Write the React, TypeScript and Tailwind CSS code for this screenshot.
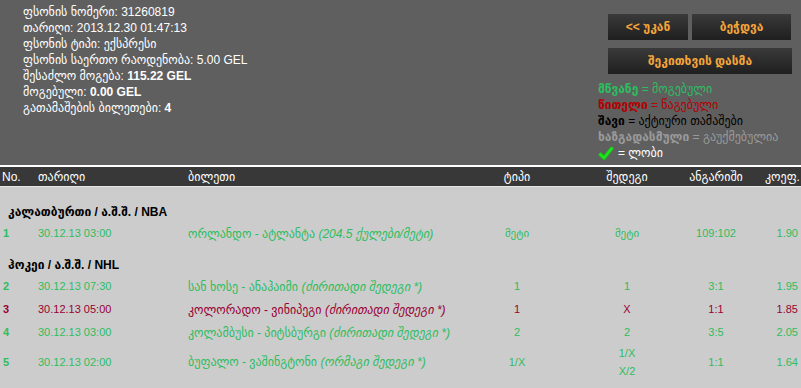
import React from "react";

type Row = {
  no: string;
  date: string;
  match: string;
  note: string;
  type: string;
  result: string[];
  score: string;
  coef: string;
  lost?: boolean;
};

const groups: { title: string; rows: Row[] }[] = [
  {
    title: "კალათბურთი / ა.შ.შ. / NBA",
    rows: [
      { no: "1", date: "30.12.13 03:00", match: "ორლანდო - ატლანტა", note: "(204.5 ქულები/მეტი)", type: "მეტი", result: ["მეტი"], score: "109:102", coef: "1.90" },
    ],
  },
  {
    title: "ჰოკეი / ა.შ.შ. / NHL",
    rows: [
      { no: "2", date: "30.12.13 07:30", match: "სან ხოსე - ანაჰაიმი", note: "(ძირითადი შედეგი *)", type: "1", result: ["1"], score: "3:1", coef: "1.95" },
      { no: "3", date: "30.12.13 05:00", match: "კოლორადო - ვინიპეგი", note: "(ძირითადი შედეგი *)", type: "1", result: ["X"], score: "1:1", coef: "1.85", lost: true },
      { no: "4", date: "30.12.13 03:00", match: "კოლამბუსი - პიტსბურგი", note: "(ძირითადი შედეგი *)", type: "2", result: ["2"], score: "3:5", coef: "2.05" },
      { no: "5", date: "30.12.13 02:00", match: "ბუფალო - ვაშინგტონი", note: "(ორმაგი შედეგი *)", type: "1/X", result: ["1/X", "X/2"], score: "1:1", coef: "1.64" },
    ],
  },
];

const cols = "grid grid-cols-[38px_150px_284px_90px_130px_48px_1fr]";

function Check() {
  return (
    <svg width="16" height="16" viewBox="0 0 16 16" className="shrink-0">
      <path d="M1.5 8.5 L6 13 L14.5 2.5" fill="none" stroke="#18b818" strokeWidth="4" strokeLinejoin="round" />
      <path d="M1.5 8.5 L6 13 L14.5 2.5" fill="none" stroke="#22e022" strokeWidth="2.4" strokeLinejoin="round" />
    </svg>
  );
}

function Btn({ label, className }: { label: string; className: string }) {
  return (
    <button className={`h-[26px] bg-gradient-to-b from-[#3a3a3a] to-[#1f1f1f] text-[#f5a53a] font-bold text-[12px] ${className}`}>
      {label}
    </button>
  );
}

export default function App() {
  return (
    <div className="min-h-screen bg-[#cccccc] font-['Liberation_Sans','DejaVu_Sans',sans-serif] text-[12px]">
      {/* ticket summary */}
      <div className="h-[165px] bg-[#5f5f5f] flex justify-between">
        <div className="pl-[23px] pt-[4px] leading-[16px] text-white">
          <div>ფსონის ნომერი: 31260819</div>
          <div>თარიღი: 2013.12.30 01:47:13</div>
          <div>ფსონის ტიპი: ექსპრესი</div>
          <div>ფსონის საერთო რაოდენობა: 5.00 GEL</div>
          <div>შესაძლო მოგება: <b>115.22 GEL</b></div>
          <div>მოგებული: <b>0.00 GEL</b></div>
          <div>გათამაშების ბილეთები: <b>4</b></div>
        </div>
        <div className="w-[203px] pt-[14px]">
          <div className="pl-[10px] flex flex-col gap-[8px]">
            <div className="flex gap-[4px]">
              <Btn label="<< უკან" className="w-[80px]" />
              <Btn label="ბეჭდვა" className="w-[99px]" />
            </div>
            <Btn label="შეკითხვის დასმა" className="w-[184px]" />
          </div>
          <div className="mt-[7px] leading-[16px] whitespace-nowrap">
            <div className="text-[#2ebd5f]"><b>მწვანე</b> = მოგებული</div>
            <div className="text-[#b30000]"><b>წითელი</b> = წაგებული</div>
            <div className="text-black"><b>შავი</b> = აქტიური თამაშები</div>
            <div className="text-[#9a9a9a]"><b>ხაზგადასმული</b> = გაუქმებულია</div>
            <div className="flex items-center gap-[4px] text-white">
              <Check />
              <span>= ლობი</span>
            </div>
          </div>
        </div>
      </div>

      <div className="h-[2px] bg-white" />

      {/* table header */}
      <div className={`${cols} h-[20px] items-center bg-[#383838] text-white border-b border-[#e6e6e6] overflow-hidden whitespace-nowrap`}>
        <div className="pl-[2px]">No.</div>
        <div>თარიღი</div>
        <div>ბილეთი</div>
        <div className="flex justify-center">ტიპი</div>
        <div className="flex justify-center">შედეგი</div>
        <div className="flex justify-center">ანგარიში</div>
        <div className="pl-[25px]">კოეფ.</div>
      </div>

      {/* table body */}
      <div className="pt-[15px] text-[11px]">
        {groups.map((g, gi) => (
          <div key={g.title} className={gi > 0 ? "mt-[10px]" : ""}>
            <div className="h-[20px] flex items-center pl-[8px] font-bold text-[12px] text-black">{g.title}</div>
            {g.rows.map((r) => (
              <div
                key={r.no}
                className={`${cols} items-center ${r.result.length > 1 ? "h-[32px]" : "h-[23px]"} ${r.lost ? "text-[#990033]" : "text-[#2ebd5f]"}`}
              >
                <div className="pl-[3px] font-bold">{r.no}</div>
                <div>{r.date}</div>
                <div className="whitespace-nowrap text-[12px]">
                  {r.match} <i>{r.note}</i>
                </div>
                <div className="flex justify-center">{r.type}</div>
                <div className={`flex flex-col items-center ${r.result.length > 1 ? "leading-[18px]" : ""}`}>
                  {r.result.map((x) => (
                    <span key={x}>{x}</span>
                  ))}
                </div>
                <div className="flex justify-center">{r.score}</div>
                <div className="text-right pr-[3px]">{r.coef}</div>
              </div>
            ))}
          </div>
        ))}
      </div>
    </div>
  );
}
